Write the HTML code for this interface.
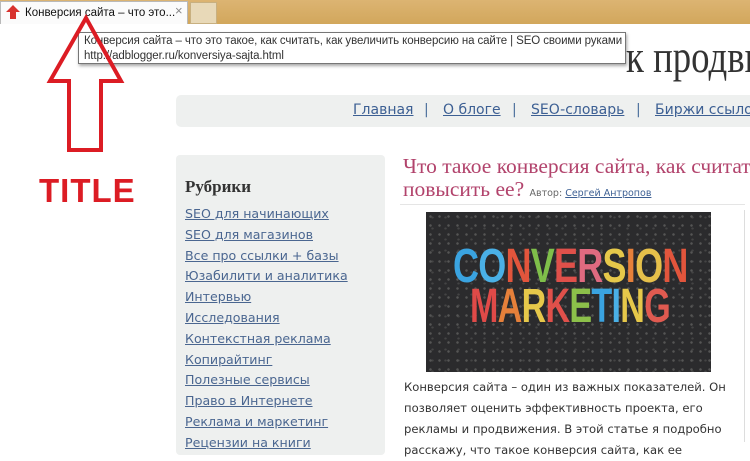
<!DOCTYPE html>
<html><head><meta charset="utf-8"><style>
*{margin:0;padding:0;box-sizing:border-box}
body{width:750px;height:442px;overflow:hidden;background:#fff;position:relative;font-family:"DejaVu Sans","Liberation Sans",sans-serif}
.a{position:absolute}
.topbar{left:0;top:0;width:750px;height:24px;background:linear-gradient(#dcb472,#d2a75c)}
.tab{left:0;top:1px;width:188px;height:23px;background:#fbfbfb;border:1px solid #b9b9b9;border-bottom:none;font-family:"Liberation Sans",sans-serif;font-size:11.5px;color:#111;padding:5px 0 0 24px;white-space:nowrap}
.tab2{left:190px;top:2px;width:27px;height:22px;background:#e8d9b8;border:1px solid #c8b080}
.tip{left:78px;top:32px;width:548px;height:32px;background:#fff;border:1px solid #767676;box-shadow:1px 2px 3px rgba(0,0,0,.35);overflow:hidden}
.tip div{position:absolute;left:5px;top:1px;font-family:"Liberation Sans",sans-serif;font-size:11.5px;color:#333;line-height:15px;white-space:nowrap;letter-spacing:-0.1px}
.clip{left:0;top:30px;width:750px;height:60px;overflow:hidden}
.head{top:4px;font-family:"Liberation Serif",serif;font-size:46px;line-height:1;color:#333;white-space:nowrap;transform:scaleX(.8);transform-origin:0 0}
.nav{left:176px;top:95px;width:574px;height:32px;background:#eef0ef;border-radius:5px 0 0 5px;overflow:hidden}
.nav span{position:absolute;top:7px;font-size:14px;color:#4a6e9c;white-space:nowrap}
.nav u{color:#3c5f93}
.side{left:176px;top:155px;width:209px;height:300px;background:#eef0ef;border-radius:4px}
.rub{left:185px;top:177px;font-family:"Liberation Serif",serif;font-weight:bold;font-size:17px;color:#333}
.links{left:185px;top:204px;font-size:12.6px;line-height:20.8px;color:#4a6690}
.links div{text-decoration:underline;white-space:nowrap}
.ttlw{left:403px;top:155px;width:347px;height:50px;overflow:hidden}
.ttl{left:0;top:0;font-family:"Liberation Serif",serif;font-size:21.5px;color:#b2436c;line-height:23px;white-space:nowrap}
.ttl small{font-family:"DejaVu Sans",sans-serif;font-size:9.5px;color:#666}
.ttl small u{color:#3c5f93}
.img{left:426px;top:212px;width:285px;height:160px;background:#2b2b2d;background-image:radial-gradient(#555 1px,transparent 1.5px),radial-gradient(#444 1px,transparent 1.5px);background-size:9px 9px,13px 11px;overflow:hidden}
.w{position:absolute;font-family:"Liberation Sans",sans-serif;font-weight:bold;white-space:nowrap;letter-spacing:-1px;transform-origin:0 0;line-height:1}
.p{left:404px;top:377px;font-size:11.6px;line-height:21px;color:#333;white-space:nowrap}
.vl{left:744px;top:210px;width:1px;height:232px;background:#ddd}
.title{left:39px;top:172px;font-family:"Liberation Sans",sans-serif;font-weight:bold;font-size:33px;color:#dc1c24;letter-spacing:1px}
</style></head><body>
<div class="a topbar"></div>
<div class="a tab">Конверсия сайта – что это...<span style="position:absolute;left:174px;top:1px;color:#888;font-size:13px">×</span></div>
<svg class="a" style="left:6px;top:5px" width="14" height="14"><path d="M7 0L14 7H10V14H4V7H0Z" fill="#d8322e"/></svg>
<div class="a tab2"></div>
<div class="a clip">
<div class="a head" style="left:626px">к продвин</div>
</div>
<div class="a tip"><div>Конверсия сайта – что это такое, как считать, как увеличить конверсию на сайте | SEO своими руками<br>http://adblogger.ru/konversiya-sajta.html</div></div>
<div class="a nav"><span style="left:177px"><u>Главная</u></span><span style="left:248px">|</span><span style="left:267px"><u>О блоге</u></span><span style="left:336px">|</span><span style="left:355px"><u>SEO-словарь</u></span><span style="left:460px">|</span><span style="left:479px"><u>Биржи ссылок</u></span></div>
<svg class="a" style="left:0;top:0" width="160" height="160"><path d="M86 18L121 81H101V150H69V81H50Z" fill="none" stroke="#dc1c24" stroke-width="4" stroke-linejoin="miter"/></svg>
<div class="a title">TITLE</div>
<div class="a side"></div>
<div class="a rub">Рубрики</div>
<div class="a links"><div>SEO для начинающих</div><div>SEO для магазинов</div><div>Все про ссылки + базы</div><div>Юзабилити и аналитика</div><div>Интервью</div><div>Исследования</div><div>Контекстная реклама</div><div>Копирайтинг</div><div>Полезные сервисы</div><div>Право в Интернете</div><div>Реклама и маркетинг</div><div>Рецензии на книги</div></div>
<div class="a ttlw"><div class="a ttl">Что такое конверсия сайта, как считать<br>повысить ее? <small>Автор: <u>Сергей Антропов</u></small></div></div>
<div class="a" style="left:400px;top:204px;width:345px;height:1px;background:#e5e5e5"></div>
<div class="a img">
<div class="w" style="left:27px;top:31px;font-size:48px;transform:scaleX(.75)"><span style="color:#3aa3e0">C</span><span style="color:#4ab0e6">O</span><span style="color:#e2553c">N</span><span style="color:#7fbf4a">V</span><span style="color:#e0504a">E</span><span style="color:#e06a80">R</span><span style="color:#e6c84a">S</span><span style="color:#e6803a">I</span><span style="color:#e6c04a">O</span><span style="color:#e2553c">N</span></div>
<div class="w" style="left:44px;top:71px;font-size:48px;transform:scaleX(.71)"><span style="color:#e04a48">M</span><span style="color:#e6803a">A</span><span style="color:#e6c84a">R</span><span style="color:#e0504a">K</span><span style="color:#8cc04a">E</span><span style="color:#3aa3e0">T</span><span style="color:#4ab0e6">I</span><span style="color:#e6c84a">N</span><span style="color:#e05a50">G</span></div>
</div>
<div class="a p">Конверсия сайта – один из важных показателей. Он<br>позволяет оценить эффективность проекта, его<br>рекламы и продвижения. В этой статье я подробно<br>расскажу, что такое конверсия сайта, как ее</div>
<div class="a vl"></div>
</body></html>
